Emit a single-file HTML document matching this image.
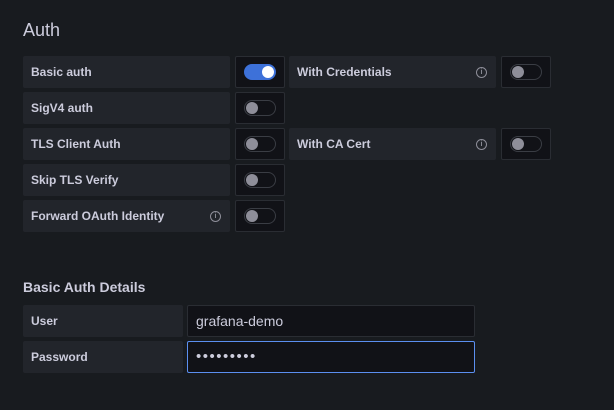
<!DOCTYPE html>
<html><head><style>
body{margin:0;width:614px;height:410px;background:#181b1f;font-family:"Liberation Sans",sans-serif;color:#ccccdc;position:relative;overflow:hidden}
.a{position:absolute}
.lbl{position:absolute;background:#22252b;border-radius:2px;height:32px;line-height:32px;font-size:12px;font-weight:bold;padding-left:8px;box-sizing:border-box;color:#ccccdc}
.tg{position:absolute;width:50px;height:32px;background:#111217;border:1px solid #2a2d33;box-sizing:border-box;border-radius:2px}
.sw{position:absolute;left:8px;top:7px;width:32px;height:16px;border:1px solid #3a3d44;border-radius:9px;box-sizing:border-box;background:#111217}
.sw::after{content:"";position:absolute;left:1px;top:1px;width:12px;height:12px;border-radius:50%;background:#8e8e99}
.sw.on{background:#3d71d9;border-color:#3d71d9}
.sw.on::after{left:auto;right:1px;background:#fff}
.i{position:absolute;right:9px;top:11px;width:11px;height:11px;border:1px solid #8e8e99;border-radius:50%;box-sizing:border-box;font-size:7px;line-height:9px;text-align:center;color:#8e8e99}
.inp{position:absolute;background:#111217;border:1px solid #2a2d33;border-radius:2px;box-sizing:border-box;height:32px;line-height:30px;padding-left:8px;font-size:14px;color:#ccccdc}
</style></head><body>
<div class="a" style="left:23px;top:20px;font-size:18px">Auth</div>

<div class="lbl" style="left:23px;top:56px;width:207px">Basic auth</div>
<div class="tg" style="left:235px;top:56px"><div class="sw on"></div></div>
<div class="lbl" style="left:289px;top:56px;width:207px">With Credentials<div class="i">i</div></div>
<div class="tg" style="left:501px;top:56px"><div class="sw"></div></div>

<div class="lbl" style="left:23px;top:92px;width:207px">SigV4 auth</div>
<div class="tg" style="left:235px;top:92px"><div class="sw"></div></div>

<div class="lbl" style="left:23px;top:128px;width:207px">TLS Client Auth</div>
<div class="tg" style="left:235px;top:128px"><div class="sw"></div></div>
<div class="lbl" style="left:289px;top:128px;width:207px">With CA Cert<div class="i">i</div></div>
<div class="tg" style="left:501px;top:128px"><div class="sw"></div></div>

<div class="lbl" style="left:23px;top:164px;width:207px">Skip TLS Verify</div>
<div class="tg" style="left:235px;top:164px"><div class="sw"></div></div>

<div class="lbl" style="left:23px;top:200px;width:207px">Forward OAuth Identity<div class="i">i</div></div>
<div class="tg" style="left:235px;top:200px"><div class="sw"></div></div>

<div class="a" style="left:23px;top:279px;font-size:14px;font-weight:bold">Basic Auth Details</div>
<div class="lbl" style="left:23px;top:305px;width:160px">User</div>
<div class="inp" style="left:187px;top:305px;width:288px">grafana-demo</div>
<div class="lbl" style="left:23px;top:341px;width:160px">Password</div>
<div class="inp" style="left:187px;top:341px;width:288px;border-color:#5b8ff0;letter-spacing:1.5px;font-size:15px">•••••••••</div>
</body></html>
